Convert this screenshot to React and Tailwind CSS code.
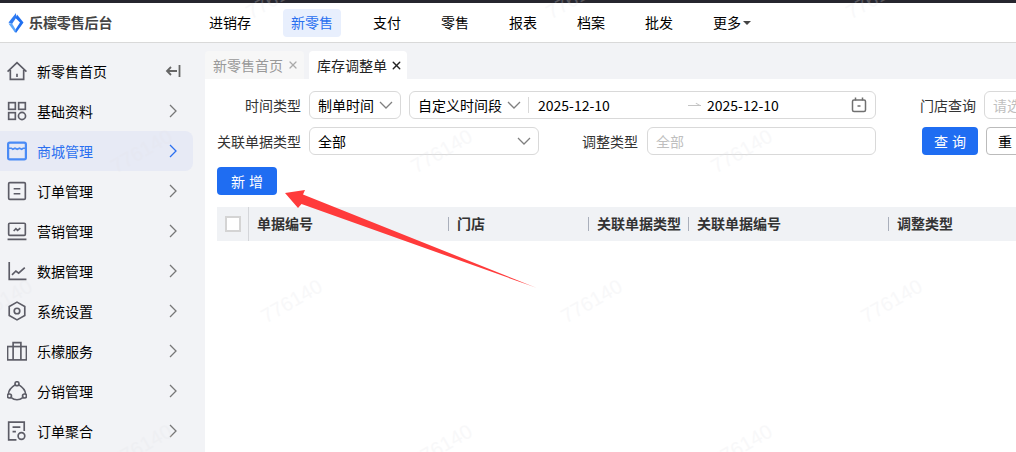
import React from "react";
import { X } from "lucide-react";

const Ic = ({ children }) => (
  <svg width="20" height="20" viewBox="1 1 18 18" fill="none" stroke="currentColor" strokeWidth="1.5" className="shrink-0">
    {children}
  </svg>
);

const icons = {
  home: <Ic><path d="M1.5 10.5 10 2.500l8.500 8M4 9v8.500h12V9" /><path d="M10 12.500v3" /></Ic>,
  grid: <Ic><rect x="2.500" y="2.500" width="6" height="6" /><rect x="11.500" y="2.500" width="6" height="6" /><rect x="2.500" y="11.500" width="6" height="6" /><circle cx="14.500" cy="14.500" r="3.200" /></Ic>,
  shop: <Ic><rect x="2" y="2.500" width="16" height="15" rx="1.500" strokeWidth="2" /><path d="M2 7.500h3l1.200 1 2-1 2 1 2-1 2 1 1.300-1H18" /></Ic>,
  order: <Ic><rect x="2.500" y="2.500" width="15" height="15" rx="1" /><path d="M7 8h6M7 12.500h6" /></Ic>,
  market: <Ic><rect x="2.500" y="3" width="15" height="11" rx="1" /><path d="M1.500 17.500h17M7 10l2-2 1.500 1.500L13 7.500" /></Ic>,
  data: <Ic><path d="M3 2v15.500h15.500M5.500 13.500 9 10l2.500 2L17 7" /></Ic>,
  system: <Ic><path d="M10 2 17 6v8l-7 4-7-4V6z" /><circle cx="10" cy="10" r="2.500" /></Ic>,
  service: <Ic><rect x="1.500" y="6" width="17" height="12" /><path d="M6.500 6V2.500h7V6M6.500 6v12M13.500 6v12" /></Ic>,
  dist: <Ic><circle cx="10" cy="3.500" r="1.800" /><circle cx="3.200" cy="14.500" r="1.800" /><circle cx="16.800" cy="14.500" r="1.800" /><path d="M8.300 4.500C5 6.500 2.500 9 2.300 12.700M11.700 4.500C15 6.500 17.500 9 17.700 12.700M4.800 16c3 2.500 7.400 2.500 10.400 0" /></Ic>,
  agg: <Ic><path d="M9.500 18H2.500V2h14v8" /><path d="M6 6.500h7M6 10.500h3" /><circle cx="14" cy="14.500" r="3" /></Ic>,
};

const menu = [
  ["新零售首页", "home"],
  ["基础资料", "grid"],
  ["商城管理", "shop", true],
  ["订单管理", "order"],
  ["营销管理", "market"],
  ["数据管理", "data"],
  ["系统设置", "system"],
  ["乐檬服务", "service"],
  ["分销管理", "dist"],
  ["订单聚合", "agg"],
];

const nav = ["进销存", "新零售", "支付", "零售", "报表", "档案", "批发"];

const marks = [
  [275, -4], [575, -4], [875, -4],
  [140, 150], [440, 150], [740, 150],
  [0, 300], [290, 300], [590, 300], [890, 300],
  [140, 445], [440, 445], [740, 445],
];

const Label = ({ w, children }) => (
  <span className={`shrink-0 text-right text-[#333] ${w}`}>{children}</span>
);

const Chev = () => (
  <svg width="22" height="16" viewBox="0 0 22 16" fill="none" stroke="#808080" strokeWidth="1.300" className="shrink-0">
    <path d="M5 5l6 6 6-6" />
  </svg>
);

const Right = ({ active }) => (
  <svg width="16" height="16" viewBox="0 0 16 16" fill="none" stroke={active ? "#2a6ff0" : "#777"} strokeWidth="1.300" className="mr-[12px] shrink-0">
    <path d="M5 2l6 6-6 6" />
  </svg>
);

const Head = ({ w, children }) => (
  <div className={`relative flex items-center h-full pl-[9px] pb-[2px] font-bold text-[#333] shrink-0 ${w}`}>
    <span className="absolute left-0 top-[10px] h-[14px] w-px bg-[#a9afbb]" />
    {children}
  </div>
);

export default function App() {
  return (
    <div
      className="relative w-[1016px] h-[452px] overflow-hidden bg-white text-[14px] text-black flex flex-col"
      style={{ fontFamily: '"Noto Sans CJK SC", "Liberation Sans", sans-serif' }}
    >
      <div className="h-[3px] bg-[#26262e] shrink-0" />
      <header className="h-[40px] shrink-0 flex items-center border-b border-[#d9d9d9] bg-white">
        <div className="w-[201px] shrink-0 flex items-center pl-2 gap-[5px]">
          <svg width="16" height="20" viewBox="0 0 16 20">
            <path d="M8 0 0.500 9.500 4 11 8 5z" fill="#2f7bf2" />
            <path d="M9 1.500 15.500 9.500 8 20 6.500 18 12 9.500 7.500 5z" fill="#1f6ff0" />
            <path d="M0.500 10.500 7 19.500 8 17 4 10.500z" fill="#5aa5fa" />
          </svg>
          <span className="font-bold text-[#444] tracking-[-0.1px]">乐檬零售后台</span>
        </div>
        <nav className="flex items-center gap-6">
          {nav.map((n) => (
            <span key={n} className={`h-7 px-2 flex items-center rounded ${n === "新零售" ? "bg-[#e8effd] text-[#2a6ff0]" : ""}`}>{n}</span>
          ))}
          <span className="h-7 px-2 flex items-center gap-[2px]">
            更多
            <span className="w-0 h-0 border-x-4 border-x-transparent border-t-[4px] border-t-[#444]" />
          </span>
        </nav>
      </header>

      <div className="flex-1 flex min-h-0">
        <aside className="w-[205px] shrink-0 bg-[#f2f3f6] pt-2 pr-3">
          {menu.map(([t, ic, active], i) => (
            <div key={t} className={`h-10 flex items-center pl-[7px] rounded-r-lg ${active ? "bg-[#e7eaf5] text-[#2a6ff0]" : ""}`}>
              <span className={active ? "text-[#4a8bf5]" : "text-[#5c5c66]"}>{icons[ic]}</span>
              <span className="ml-[10px] flex-1">{t}</span>
              {i === 0 ? (
                <svg width="16" height="14" viewBox="0 0 16 14" fill="none" stroke="#666" strokeWidth="1.800" className="mr-[12px]">
                  <path d="M14.500 1v12M12 7H2M6 3 2 7l4 4" />
                </svg>
              ) : (
                <Right active={active} />
              )}
            </div>
          ))}
        </aside>

        <main className="flex-1 min-w-0 flex flex-col">
          <div className="h-[36px] shrink-0 bg-[#f2f3f6] flex items-end gap-[5px]">
            <div className="w-[99px] h-7 bg-[#f7f7f7] rounded-t flex items-center pl-2 gap-[4px] text-[#999]">
              新零售首页 <X size={12} strokeWidth={2.5} className="text-[#aaa]" />
            </div>
            <div className="w-[98px] h-7 bg-white rounded-t flex items-center pl-2 gap-[3px] text-[#222]">
              库存调整单 <X size={13} strokeWidth={2.5} className="text-[#222]" />
            </div>
          </div>

          <div className="pt-3 pl-3 flex flex-col w-[811px] overflow-hidden">
            <div className="flex items-center h-7 w-[900px]">
              <Label w="w-[84px]">时间类型</Label>
              <div className="ml-2 w-[92px] h-7 border border-[#d9d9d9] rounded-md flex items-center justify-between pl-2 pr-[3px] shrink-0">
                制单时间 <Chev />
              </div>
              <div className="ml-2 w-[467px] h-7 border border-[#d9d9d9] rounded-md flex items-center pl-2 pr-[8px] shrink-0">
                <span className="w-[85px] shrink-0">自定义时间段</span>
                <Chev />
                <span className="ml-[3px] h-4 w-px bg-[#d9d9d9] shrink-0" />
                <span className="ml-[9px] w-[72px] shrink-0">2025-12-10</span>
                <span className="ml-[78px] w-[13px] relative h-px bg-[#c4c4c4] shrink-0">
                  <span className="absolute right-0 -top-[3px] w-[5px] h-[3px] border-b border-[#c4c4c4] rotate-[30deg]" />
                </span>
                <span className="ml-[6px] w-[72px] shrink-0">2025-12-10</span>
                <svg width="16" height="16" viewBox="0 0 16 16" fill="none" stroke="#707070" strokeWidth="1.500" className="ml-auto">
                  <rect x="1.500" y="3" width="13" height="11.500" rx="1.500" />
                  <path d="M4.500 .5v3M11.500 .5v3M6.500 9h3" />
                </svg>
              </div>
              <Label w="w-[100px]">门店查询</Label>
              <div className="ml-2 w-[100px] h-7 border border-[#d9d9d9] rounded-md flex items-center pl-2 text-[#bfbfbf] shrink-0">请选择</div>
            </div>

            <div className="flex items-center h-7 mt-2 w-[900px]">
              <Label w="w-[84px]">关联单据类型</Label>
              <div className="ml-2 w-[230px] h-7 border border-[#d9d9d9] rounded-md flex items-center justify-between pl-2 pr-[3px] shrink-0">
                全部 <Chev />
              </div>
              <Label w="w-[99px]">调整类型</Label>
              <div className="ml-[9px] w-[229px] h-7 border border-[#d9d9d9] rounded-md flex items-center pl-2 text-[#bfbfbf] shrink-0">全部</div>
              <button className="ml-[46px] w-[56px] h-7 bg-[#1f6df2] text-white rounded shrink-0 tracking-[4px] pl-[4px]">查询</button>
              <button className="ml-2 w-[56px] h-7 bg-white border border-[#bbb] rounded shrink-0 tracking-[4px] pl-[4px]">重置</button>
            </div>

            <button className="mt-3 w-[60px] h-7 bg-[#1f6df2] text-white rounded tracking-[4px] pl-[4px]">新增</button>

            <div className="mt-3 h-[34px] bg-[#f0f2f5] flex items-center w-[900px]">
              <div className="w-[32px] h-full flex items-center justify-end border-r border-[#d4d6da] pr-[7px] shrink-0">
                <span className="w-4 h-4 bg-white border-2 border-[#d4d4d4]" />
              </div>
              <div className="w-[199px] pl-2 pb-[2px] font-bold text-[#333] shrink-0">单据编号</div>
              <Head w="w-[140px]">门店</Head>
              <Head w="w-[100px]">关联单据类型</Head>
              <Head w="w-[200px]">关联单据编号</Head>
              <Head w="w-[140px]">调整类型</Head>
            </div>
          </div>
        </main>
      </div>

      {marks.map(([x, y], i) => (
        <span
          key={i}
          className="absolute text-[20px] text-[#e4e5ea] opacity-25 -rotate-[30deg] pointer-events-none"
          style={{ left: x - 32, top: y - 14, fontFamily: '"Liberation Sans", sans-serif' }}
        >
          776140
        </span>
      ))}

      <svg width="1016" height="452" className="absolute left-0 top-0 pointer-events-none">
        <defs>
          <linearGradient id="arrowFade" x1="285" y1="192" x2="537" y2="288" gradientUnits="userSpaceOnUse">
            <stop offset="0.93" stopColor="#ff3b3b" />
            <stop offset="1" stopColor="#ffa0a0" />
          </linearGradient>
        </defs>
        <polygon points="285,193 305,190 303,194.500 537,288 301.500,204 298,208" fill="url(#arrowFade)" />
      </svg>
    </div>
  );
}
